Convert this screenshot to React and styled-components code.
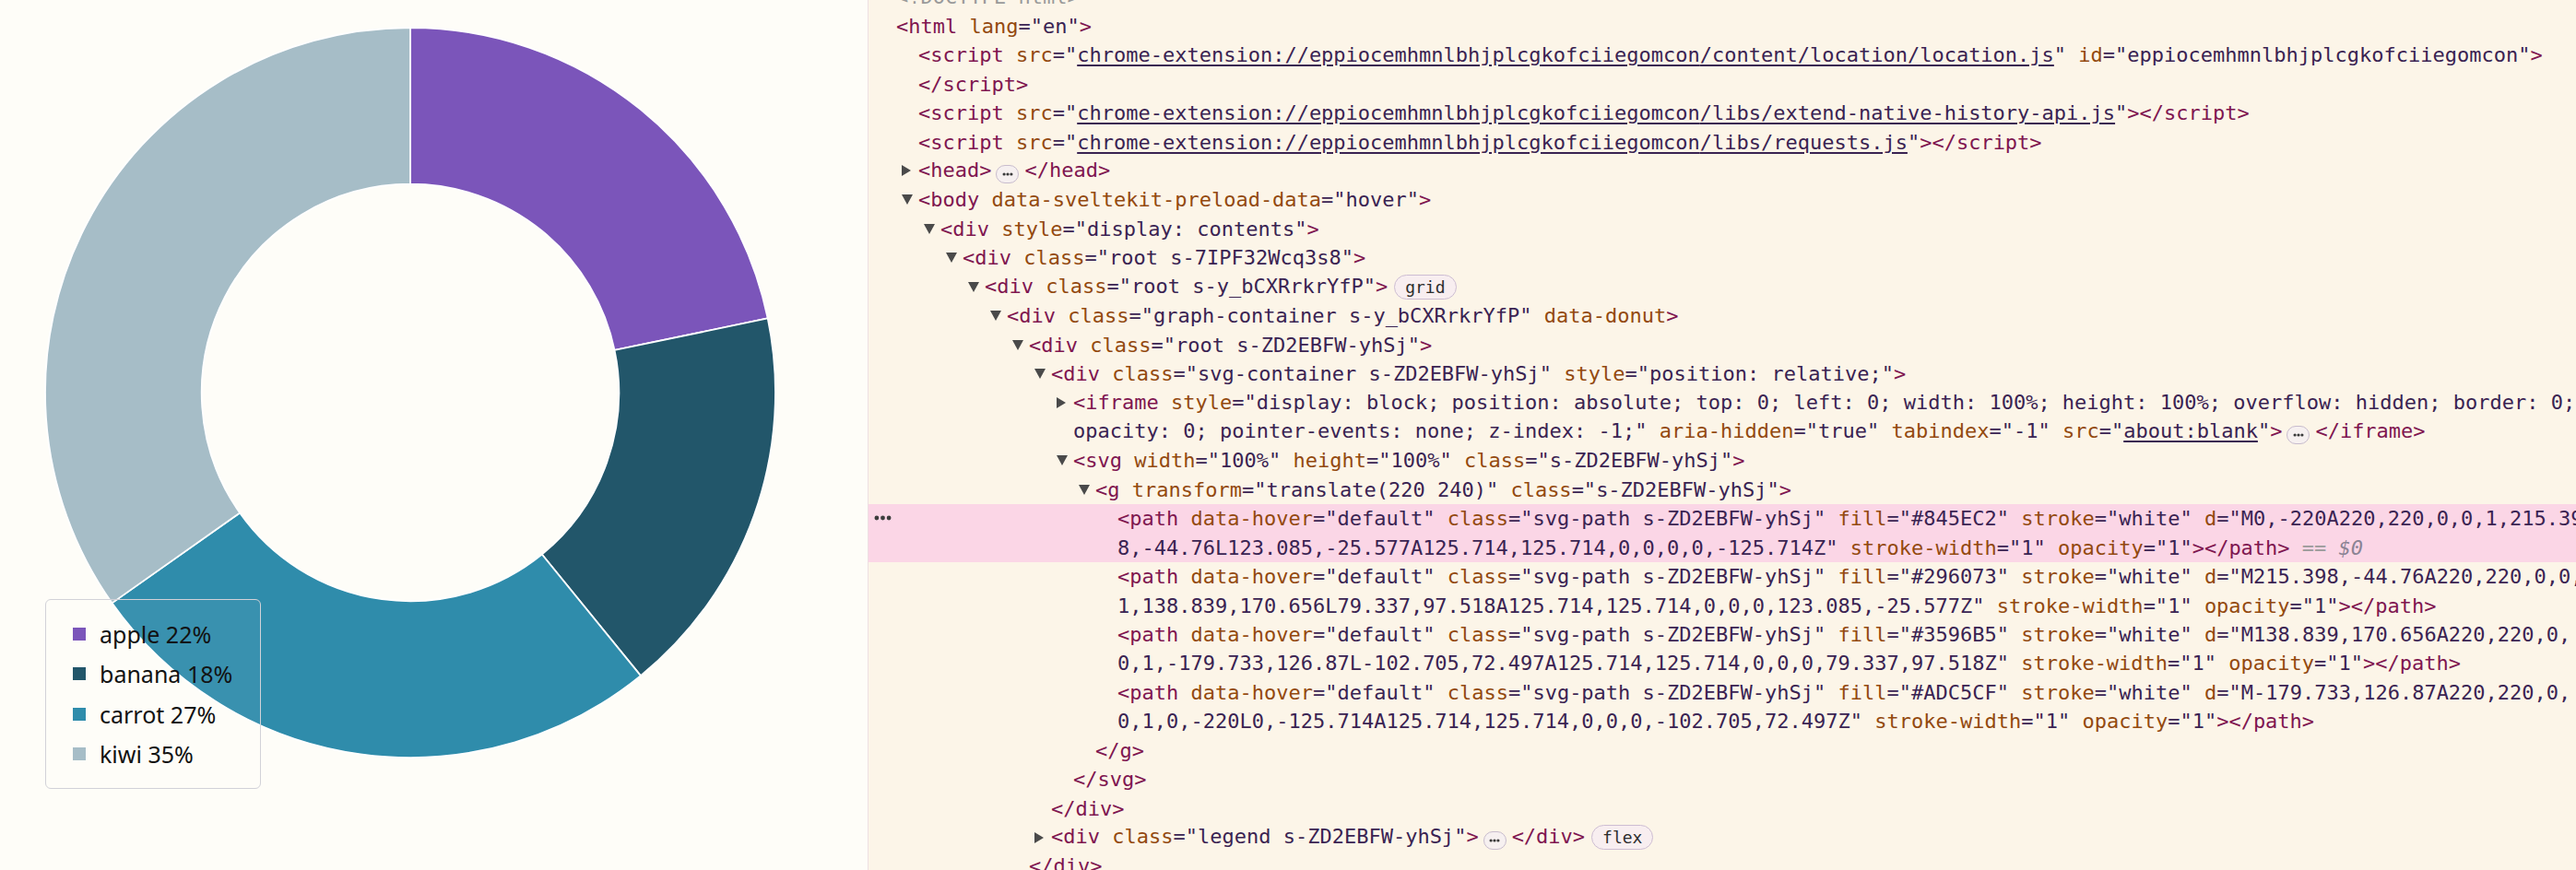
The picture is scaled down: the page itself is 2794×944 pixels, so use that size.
import React from "react";
import styled, { createGlobalStyle } from "styled-components";

const Global = createGlobalStyle`
  html, body { margin: 0; padding: 0; overflow: hidden; background: #fefdf8; }
  * { box-sizing: border-box; }
`;

const Page = styled.div`
  display: flex;
  width: 2794px;
  height: 944px;
  overflow: hidden;
`;

const ChartPane = styled.div`
  position: relative;
  flex: none;
  width: 941px;
  height: 944px;
  background: #fefdf8;
`;

const ChartSvg = styled.svg`
  display: block;
  width: 941px;
  height: 944px;
`;

const Legend = styled.div`
  position: absolute;
  left: 49px;
  top: 650px;
  display: flex;
  flex-direction: column;
  padding: 15px 30px 15px 29px;
  border: 1px solid #d2d2d8;
  border-radius: 6px;
  background: rgba(255, 255, 255, 0.05);
  font-family: "Noto Sans", "Open Sans", sans-serif;
  font-size: 25px;
  color: #121212;
`;

const LegendItem = styled.div`
  display: flex;
  align-items: center;
  gap: 15px;
  height: 43.5px;
  white-space: nowrap;
`;

const Swatch = styled.span`
  flex: none;
  width: 14px;
  height: 14px;
  background: ${(p) => p.$color};
`;

const DevPane = styled.div`
  flex: 1;
  min-width: 0;
  height: 944px;
  border-left: 1px solid #eedfe2;
  background: #fcf5e8;
  overflow: hidden;
  font-family: "DejaVu Sans Mono", "Liberation Mono", monospace;
  font-size: 22px;
  color: #3a2352;
`;

const Tree = styled.div`
  margin-top: -18.9px;
`;

const Row = styled.div`
  display: flex;
  align-items: center;
  height: 31.45px;
  padding-left: ${(p) => 12 + p.$depth * 24}px;
  overflow: hidden;
`;

const TwistySlot = styled.span`
  flex: none;
  width: 18px;
  height: 100%;
  display: flex;
  align-items: center;
`;

const Code = styled.span`
  display: flex;
  align-items: center;
  white-space: pre;
`;

const Arrow = styled.span`
  width: 0;
  height: 0;
  ${(p) =>
    p.$dir === "down"
      ? `border-left: 6px solid transparent; border-right: 6px solid transparent; border-top: 11px solid #4a4a4a;`
      : `border-top: 6.5px solid transparent; border-bottom: 6.5px solid transparent; border-left: 10px solid #4a4a4a;`}
`;

const Tg = styled.span`
  color: #7f1650;
`;
const An = styled.span`
  color: #93490f;
`;
const Av = styled.span`
  color: #3a2352;
`;
const Lk = styled.span`
  color: #3a2352;
  text-decoration: underline;
  text-underline-offset: 3px;
`;
const Gray = styled.span`
  color: #9a9a9a;
`;
const Dollar = styled.span`
  color: #8b8494;
  font-style: italic;
`;

const Badge = styled.span`
  display: inline-flex;
  align-items: center;
  height: 27px;
  margin-left: 7px;
  padding: 0 11px;
  border: 1.5px solid #cdbdd2;
  border-radius: 14px;
  background: #f8eef0;
  color: #2d2d2d;
  font-size: 18px;
`;

const Ellipsis = styled.span`
  display: inline-flex;
  align-items: center;
  justify-content: center;
  flex: none;
  width: 25px;
  height: 20px;
  margin: 0 6px 0 5px;
  border: 1.5px solid #c8bccd;
  border-radius: 10px;
  background: #f6f0f0;
`;

const Highlight = styled.div`
  position: relative;
  background: #fbd6e6;
`;

const RowDots = styled.span`
  position: absolute;
  left: 6px;
  top: 12px;
  display: flex;
`;

const Dots = ({ w = 13, r = 1.6, fill = "#333" }) => (
  <svg width={w} height={6} viewBox={`0 0 ${w} 6`}>
    <circle cx={r + 0.5} cy={3} r={r} fill={fill} />
    <circle cx={w / 2} cy={3} r={r} fill={fill} />
    <circle cx={w - r - 0.5} cy={3} r={r} fill={fill} />
  </svg>
);

const More = () => (
  <Ellipsis>
    <Dots w={12} r={1.6} fill="#3a3a3a" />
  </Ellipsis>
);

const Line = ({ depth, twisty, children }) => (
  <Row $depth={depth}>
    <TwistySlot>{twisty ? <Arrow $dir={twisty} /> : null}</TwistySlot>
    <Code>
      <span>{children}</span>
    </Code>
  </Row>
);

const Attr = ({ n, v }) => (
  <>
    {" "}
    <An>{n}</An>
    <Av>="{v}"</Av>
  </>
);

const slices = [
  {
    name: "apple",
    pct: 22,
    color: "#845EC2",
    shown: "#7b55ba",
    d: "M0,-220A220,220,0,0,1,215.398,-44.76L123.085,-25.577A125.714,125.714,0,0,0,0,-125.714Z",
    head: "M0,-220A220,220,0,0,1,215.39",
    tail: "8,-44.76L123.085,-25.577A125.714,125.714,0,0,0,0,-125.714Z",
  },
  {
    name: "banana",
    pct: 18,
    color: "#296073",
    shown: "#22566a",
    d: "M215.398,-44.76A220,220,0,0,1,138.839,170.656L79.337,97.518A125.714,125.714,0,0,0,123.085,-25.577Z",
    head: "M215.398,-44.76A220,220,0,0,",
    tail: "1,138.839,170.656L79.337,97.518A125.714,125.714,0,0,0,123.085,-25.577Z",
  },
  {
    name: "carrot",
    pct: 27,
    color: "#3596B5",
    shown: "#2f8cab",
    d: "M138.839,170.656A220,220,0,0,1,-179.733,126.87L-102.705,72.497A125.714,125.714,0,0,0,79.337,97.518Z",
    head: "M138.839,170.656A220,220,0,",
    tail: "0,1,-179.733,126.87L-102.705,72.497A125.714,125.714,0,0,0,79.337,97.518Z",
  },
  {
    name: "kiwi",
    pct: 35,
    color: "#ADC5CF",
    shown: "#a6bdc7",
    d: "M-179.733,126.87A220,220,0,0,1,0,-220L0,-125.714A125.714,125.714,0,0,0,-102.705,72.497Z",
    head: "M-179.733,126.87A220,220,0,",
    tail: "0,1,0,-220L0,-125.714A125.714,125.714,0,0,0,-102.705,72.497Z",
  },
];

const PathHead = ({ s }) => (
  <Line depth={10}>
    <Tg>&lt;path</Tg>
    <Attr n="data-hover" v="default" />
    <Attr n="class" v="svg-path s-ZD2EBFW-yhSj" />
    <Attr n="fill" v={s.color} />
    <Attr n="stroke" v="white" />{" "}
    <An>d</An>
    <Av>="{s.head}</Av>
  </Line>
);

const PathTail = ({ s, selected }) => (
  <Line depth={10}>
    <Av>{s.tail}"</Av>
    <Attr n="stroke-width" v="1" />
    <Attr n="opacity" v="1" />
    <Tg>&gt;&lt;/path&gt;</Tg>
    {selected ? (
      <>
        <Gray> == </Gray>
        <Dollar>$0</Dollar>
      </>
    ) : null}
  </Line>
);

const EXT = "chrome-extension://eppiocemhmnlbhjplcgkofciiegomcon";

export default function App() {
  return (
    <Page>
      <Global />
      <ChartPane>
        <ChartSvg viewBox="-247.222 -236.667 522.778 524.444">
          {slices.map((s) => (
            <path key={s.name} d={s.d} fill={s.shown} stroke="white" strokeWidth="1" />
          ))}
        </ChartSvg>
        <Legend>
          {slices.map((s) => (
            <LegendItem key={s.name}>
              <Swatch $color={s.shown} />
              {s.name} {s.pct}%
            </LegendItem>
          ))}
        </Legend>
      </ChartPane>

      <DevPane>
        <Tree>
          <Line depth={0}>
            <Gray>&lt;!DOCTYPE html&gt;</Gray>
          </Line>
          <Line depth={0}>
            <Tg>&lt;html</Tg>
            <Attr n="lang" v="en" />
            <Tg>&gt;</Tg>
          </Line>
          <Line depth={1}>
            <Tg>&lt;script</Tg> <An>src</An>
            <Av>="</Av>
            <Lk>{EXT}/content/location/location.js</Lk>
            <Av>"</Av>
            <Attr n="id" v="eppiocemhmnlbhjplcgkofciiegomcon" />
            <Tg>&gt;</Tg>
          </Line>
          <Line depth={1}>
            <Tg>&lt;/script&gt;</Tg>
          </Line>
          <Line depth={1}>
            <Tg>&lt;script</Tg> <An>src</An>
            <Av>="</Av>
            <Lk>{EXT}/libs/extend-native-history-api.js</Lk>
            <Av>"</Av>
            <Tg>&gt;&lt;/script&gt;</Tg>
          </Line>
          <Line depth={1}>
            <Tg>&lt;script</Tg> <An>src</An>
            <Av>="</Av>
            <Lk>{EXT}/libs/requests.js</Lk>
            <Av>"</Av>
            <Tg>&gt;&lt;/script&gt;</Tg>
          </Line>
          <Line depth={1} twisty="right">
            <Tg>&lt;head&gt;</Tg>
            <More />
            <Tg>&lt;/head&gt;</Tg>
          </Line>
          <Line depth={1} twisty="down">
            <Tg>&lt;body</Tg>
            <Attr n="data-sveltekit-preload-data" v="hover" />
            <Tg>&gt;</Tg>
          </Line>
          <Line depth={2} twisty="down">
            <Tg>&lt;div</Tg>
            <Attr n="style" v="display: contents" />
            <Tg>&gt;</Tg>
          </Line>
          <Line depth={3} twisty="down">
            <Tg>&lt;div</Tg>
            <Attr n="class" v="root s-7IPF32Wcq3s8" />
            <Tg>&gt;</Tg>
          </Line>
          <Line depth={4} twisty="down">
            <Tg>&lt;div</Tg>
            <Attr n="class" v="root s-y_bCXRrkrYfP" />
            <Tg>&gt;</Tg>
            <Badge>grid</Badge>
          </Line>
          <Line depth={5} twisty="down">
            <Tg>&lt;div</Tg>
            <Attr n="class" v="graph-container s-y_bCXRrkrYfP" /> <An>data-donut</An>
            <Tg>&gt;</Tg>
          </Line>
          <Line depth={6} twisty="down">
            <Tg>&lt;div</Tg>
            <Attr n="class" v="root s-ZD2EBFW-yhSj" />
            <Tg>&gt;</Tg>
          </Line>
          <Line depth={7} twisty="down">
            <Tg>&lt;div</Tg>
            <Attr n="class" v="svg-container s-ZD2EBFW-yhSj" />
            <Attr n="style" v="position: relative;" />
            <Tg>&gt;</Tg>
          </Line>
          <Line depth={8} twisty="right">
            <Tg>&lt;iframe</Tg> <An>style</An>
            <Av>="display: block; position: absolute; top: 0; left: 0; width: 100%; height: 100%; overflow: hidden; border: 0;</Av>
          </Line>
          <Line depth={8}>
            <Av>opacity: 0; pointer-events: none; z-index: -1;"</Av>
            <Attr n="aria-hidden" v="true" />
            <Attr n="tabindex" v="-1" /> <An>src</An>
            <Av>="</Av>
            <Lk>about:blank</Lk>
            <Av>"</Av>
            <Tg>&gt;</Tg>
            <More />
            <Tg>&lt;/iframe&gt;</Tg>
          </Line>
          <Line depth={8} twisty="down">
            <Tg>&lt;svg</Tg>
            <Attr n="width" v="100%" />
            <Attr n="height" v="100%" />
            <Attr n="class" v="s-ZD2EBFW-yhSj" />
            <Tg>&gt;</Tg>
          </Line>
          <Line depth={9} twisty="down">
            <Tg>&lt;g</Tg>
            <Attr n="transform" v="translate(220 240)" />
            <Attr n="class" v="s-ZD2EBFW-yhSj" />
            <Tg>&gt;</Tg>
          </Line>
          <Highlight>
            <RowDots>
              <Dots w={19} r={2.4} fill="#3d3d3d" />
            </RowDots>
            <PathHead s={slices[0]} />
            <PathTail s={slices[0]} selected />
          </Highlight>
          {slices.slice(1).map((s) => (
            <React.Fragment key={s.name}>
              <PathHead s={s} />
              <PathTail s={s} />
            </React.Fragment>
          ))}
          <Line depth={9}>
            <Tg>&lt;/g&gt;</Tg>
          </Line>
          <Line depth={8}>
            <Tg>&lt;/svg&gt;</Tg>
          </Line>
          <Line depth={7}>
            <Tg>&lt;/div&gt;</Tg>
          </Line>
          <Line depth={7} twisty="right">
            <Tg>&lt;div</Tg>
            <Attr n="class" v="legend s-ZD2EBFW-yhSj" />
            <Tg>&gt;</Tg>
            <More />
            <Tg>&lt;/div&gt;</Tg>
            <Badge>flex</Badge>
          </Line>
          <Line depth={6}>
            <Tg>&lt;/div&gt;</Tg>
          </Line>
        </Tree>
      </DevPane>
    </Page>
  );
}
